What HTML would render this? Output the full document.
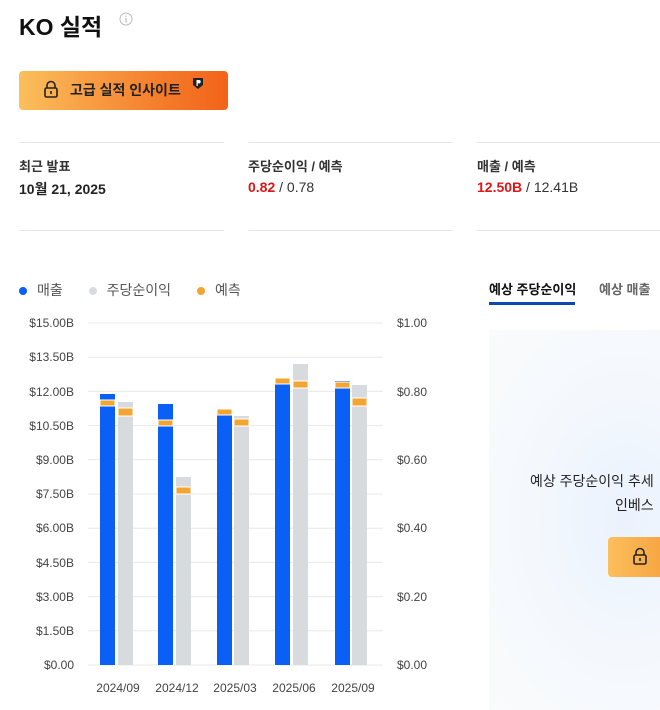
<!DOCTYPE html>
<html><head><meta charset="utf-8"><style>
*{margin:0;padding:0;box-sizing:border-box}
body{width:660px;height:710px;overflow:hidden;background:#fff;font-family:"Liberation Sans","Noto Sans CJK KR",sans-serif;color:#1a1a1a;position:relative}
.a{position:absolute;white-space:nowrap}
.hr{position:absolute;height:1px;background:#e3e6ea}
.lab{font-size:13px;font-weight:bold;color:#333}
.val{font-size:14px;color:#333}
.red{color:#e01515;font-weight:bold}
</style></head><body>
<div class="a" style="left:19px;top:8px;font-size:23px;font-weight:bold;color:#111">KO 실적</div>
<svg class="a" style="left:119px;top:12px" width="14" height="14" viewBox="0 0 14 14"><circle cx="7" cy="7" r="6" fill="none" stroke="#bbb" stroke-width="1"/><rect x="6.4" y="6" width="1.2" height="4.5" fill="#bbb"/><rect x="6.4" y="3.6" width="1.2" height="1.3" fill="#bbb"/></svg>
<div class="a" style="left:19px;top:71px;width:209px;height:39px;border-radius:4px;background:linear-gradient(90deg,#fbbf5b,#f47a2a 70%,#f26318)"></div>
<svg class="a" style="left:43px;top:80px" width="16" height="18" viewBox="0 0 16 18"><path d="M4 8V5.5a4 4 0 0 1 8 0V8" fill="none" stroke="#222" stroke-width="1.6"/><rect x="2" y="8" width="12" height="9" rx="1.5" fill="none" stroke="#222" stroke-width="1.6"/><rect x="7.2" y="11" width="1.6" height="3" fill="#222"/></svg>
<div class="a" style="left:70px;top:80px;font-size:14px;font-weight:bold;color:#222">고급 실적 인사이트</div>
<svg class="a" style="left:192px;top:77px" width="12" height="13" viewBox="0 0 12 13"><path d="M1 1h10v7l-5 4-5-4z" fill="#222"/><path d="M4.5 3h2.5a1.7 1.7 0 0 1 0 3.4H5.7V9H4.5z" fill="#fff"/></svg>

<div class="hr" style="left:19px;top:142px;width:205px"></div>
<div class="hr" style="left:248px;top:142px;width:205px"></div>
<div class="hr" style="left:477px;top:142px;width:183px"></div>
<div class="hr" style="left:19px;top:230px;width:205px"></div>
<div class="hr" style="left:248px;top:230px;width:205px"></div>
<div class="hr" style="left:477px;top:230px;width:183px"></div>
<div class="a lab" style="left:19px;top:156px">최근 발표</div>
<div class="a" style="left:19px;top:179px;font-size:14px;font-weight:bold;color:#222">10월 21, 2025</div>
<div class="a lab" style="left:248px;top:156px">주당순이익 / 예측</div>
<div class="a val" style="left:248px;top:179px"><span class="red">0.82</span> / 0.78</div>
<div class="a lab" style="left:477px;top:156px">매출 / 예측</div>
<div class="a val" style="left:477px;top:179px"><span class="red">12.50B</span> / 12.41B</div>

<div class="a" style="left:19px;top:280px;font-size:14px;color:#555">
<span style="display:inline-block;width:8px;height:8px;border-radius:50%;background:#0a5ff5;margin-right:10px"></span>매출
<span style="display:inline-block;width:8px;height:8px;border-radius:50%;background:#d8dbde;margin:0 10px 0 22px"></span>주당순이익
<span style="display:inline-block;width:8px;height:8px;border-radius:50%;background:#f2a631;margin:0 10px 0 22px"></span>예측</div>

<svg class="a" style="left:0;top:310px" width="460" height="400" font-family="Liberation Sans, sans-serif" font-size="12" fill="#444">
<g stroke="#e6e8eb" stroke-width="1">
<line x1="88" x2="383" y1="13" y2="13"/><line x1="88" x2="383" y1="47.2" y2="47.2"/><line x1="88" x2="383" y1="81.4" y2="81.4"/><line x1="88" x2="383" y1="115.6" y2="115.6"/><line x1="88" x2="383" y1="149.8" y2="149.8"/><line x1="88" x2="383" y1="184" y2="184"/><line x1="88" x2="383" y1="218.2" y2="218.2"/><line x1="88" x2="383" y1="252.4" y2="252.4"/><line x1="88" x2="383" y1="286.6" y2="286.6"/><line x1="88" x2="383" y1="320.8" y2="320.8"/><line x1="88" x2="383" y1="355" y2="355"/></g>
<g text-anchor="end">
<text x="74" y="17">$15.00B</text><text x="74" y="51">$13.50B</text><text x="74" y="86">$12.00B</text><text x="74" y="120">$10.50B</text><text x="74" y="154">$9.00B</text><text x="74" y="188">$7.50B</text><text x="74" y="222">$6.00B</text><text x="74" y="257">$4.50B</text><text x="74" y="291">$3.00B</text><text x="74" y="325">$1.50B</text><text x="74" y="359">$0.00</text></g>
<g><text x="397" y="17">$1.00</text><text x="397" y="86">$0.80</text><text x="397" y="154">$0.60</text><text x="397" y="222">$0.40</text><text x="397" y="291">$0.20</text><text x="397" y="359">$0.00</text></g>
<g text-anchor="middle"><text x="118" y="382">2024/09</text><text x="177" y="382">2024/12</text><text x="235" y="382">2025/03</text><text x="294" y="382">2025/06</text><text x="353" y="382">2025/09</text></g>
<g>
<rect x="100" y="84" width="15" height="271" fill="#0a5ff5"/><rect x="100" y="90" width="15" height="6" fill="#f2a631" stroke="#fff"/>
<rect x="118" y="92" width="15" height="263" fill="#d8dbde"/><rect x="118" y="98" width="15" height="8" fill="#f2a631" stroke="#fff"/>
<rect x="158" y="94" width="15" height="261" fill="#0a5ff5"/><rect x="158" y="110" width="15" height="6" fill="#f2a631" stroke="#fff"/>
<rect x="176" y="167" width="15" height="188" fill="#d8dbde"/><rect x="176" y="177" width="15" height="7" fill="#f2a631" stroke="#fff"/>
<rect x="217" y="105" width="15" height="250" fill="#0a5ff5"/><rect x="217" y="99" width="15" height="6" fill="#f2a631" stroke="#fff"/>
<rect x="234" y="106" width="15" height="249" fill="#d8dbde"/><rect x="234" y="109" width="15" height="7" fill="#f2a631" stroke="#fff"/>
<rect x="275" y="74" width="15" height="281" fill="#0a5ff5"/><rect x="275" y="68" width="15" height="6" fill="#f2a631" stroke="#fff"/>
<rect x="293" y="54" width="15" height="301" fill="#d8dbde"/><rect x="293" y="71" width="15" height="7" fill="#f2a631" stroke="#fff"/>
<rect x="335" y="71" width="15" height="284" fill="#0a5ff5"/><rect x="335" y="72" width="15" height="6" fill="#f2a631" stroke="#fff"/>
<rect x="352" y="75" width="15" height="280" fill="#d8dbde"/><rect x="352" y="88" width="15" height="8" fill="#f2a631" stroke="#fff"/>
</g></svg>

<div class="a" style="left:489px;top:279px;font-size:13px;font-weight:bold;color:#111">예상 주당순이익</div>
<div class="a" style="left:489px;top:302px;width:86px;height:3px;background:#0b49b0"></div>
<div class="a" style="left:599px;top:279px;font-size:13px;font-weight:bold;color:#666">예상 매출</div>
<div class="a" style="left:489px;top:330px;width:171px;height:380px;background:radial-gradient(ellipse at 80% 50%,#eaf2fd 0%,#f4f8fd 50%,#fafbfc 100%)"></div>
<div class="a" style="left:530px;top:471px;font-size:14px;color:#222">예상 주당순이익 추세</div>
<div class="a" style="left:615px;top:495px;font-size:14px;color:#222">인베스</div>
<div class="a" style="left:608px;top:537px;width:60px;height:40px;border-radius:4px;background:linear-gradient(90deg,#fbbf5b,#f6a33f)"></div>
<svg class="a" style="left:632px;top:547px" width="16" height="18" viewBox="0 0 16 18"><path d="M4 8V5.5a4 4 0 0 1 8 0V8" fill="none" stroke="#222" stroke-width="1.6"/><rect x="2" y="8" width="12" height="9" rx="1.5" fill="none" stroke="#222" stroke-width="1.6"/><rect x="7.2" y="11" width="1.6" height="3" fill="#222"/></svg>
</body></html>
